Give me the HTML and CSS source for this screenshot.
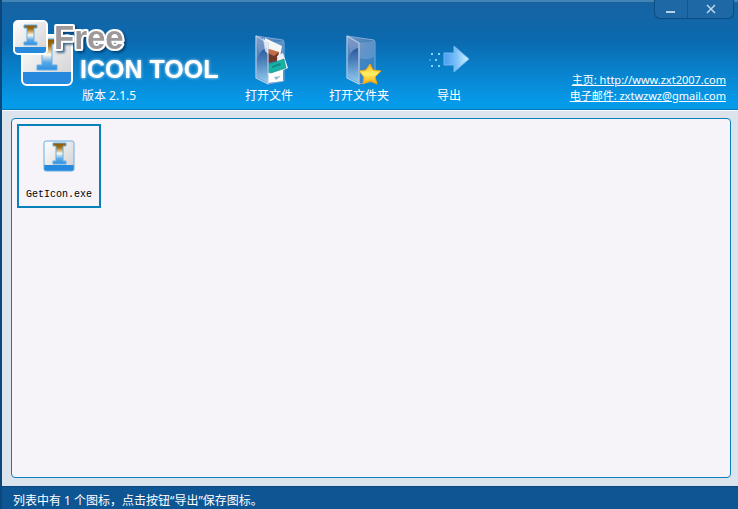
FILE: index.html
```html
<!DOCTYPE html>
<html lang="zh-CN">
<head>
<meta charset="utf-8">
<title>Free Icon Tool</title>
<link rel="stylesheet" href="styles.css">
</head>
<body>
<svg width="0" height="0" class="defs" aria-hidden="true">
  <defs>
    <linearGradient id="paper" x1="0" y1="0" x2="1" y2="1">
      <stop offset="0" stop-color="#fff"/><stop offset="1" stop-color="#cfcfd1"/>
    </linearGradient>
    <linearGradient id="beam" x1="0" y1="0" x2="0" y2="1">
      <stop offset="0" stop-color="#8a5a00"/><stop offset=".2" stop-color="#a06c0c"/>
      <stop offset=".5" stop-color="#fff8e8"/><stop offset=".75" stop-color="#5aa8e8"/><stop offset="1" stop-color="#2e8fe0"/>
    </linearGradient>
    <linearGradient id="glass" x1="0" y1="0" x2="1" y2="1">
      <stop offset="0" stop-color="#8fa6cd"/><stop offset=".45" stop-color="#5c87bf"/><stop offset="1" stop-color="#2f86cc"/>
    </linearGradient>
    <linearGradient id="flap" x1="0" y1="0" x2="0" y2="1">
      <stop offset="0" stop-color="#8b9fc9"/><stop offset=".5" stop-color="#5f84bd"/><stop offset="1" stop-color="#8cc3ea"/>
    </linearGradient>
    <linearGradient id="inner" x1="0" y1="0" x2="0" y2="1">
      <stop offset="0" stop-color="#164a94" stop-opacity=".8"/><stop offset="1" stop-color="#9fd2f4" stop-opacity=".7"/>
    </linearGradient>
    <linearGradient id="gold" x1="0" y1="0" x2="0" y2="1">
      <stop offset="0" stop-color="#ffb414"/><stop offset=".5" stop-color="#fff06a"/><stop offset="1" stop-color="#ffa600"/>
    </linearGradient>
    <linearGradient id="arrow" x1="0" y1="0" x2="1" y2="0">
      <stop offset="0" stop-color="#4a9df0"/><stop offset=".5" stop-color="#7cc0fa"/><stop offset="1" stop-color="#d2f5ff"/>
    </linearGradient>
    <filter id="glow" x="-10%" y="-40%" width="120%" height="180%">
      <feDropShadow dx="0" dy="0" stdDeviation="1.5" flood-color="#fff" flood-opacity=".8"/>
    </filter>
    <filter id="shade" x="-10%" y="-20%" width="130%" height="160%">
      <feDropShadow dx="2" dy="2" stdDeviation="1" flood-color="#003060" flood-opacity=".7"/>
    </filter>
    <symbol id="folder" viewBox="0 0 36 52">
      <path d="M2 2l27 4 1 2v39l-16 3z" fill="url(#glass)" fill-opacity=".75" stroke="#7fa8d6" stroke-width="1"/>
      <path d="M14 9l15-2v16q-7 4-15 1z" fill="#fff" fill-opacity=".15"/>
    </symbol>
    <symbol id="cover" viewBox="0 0 36 52">
      <path d="M2 2l12 7v41L2 44z" fill="url(#flap)" fill-opacity=".75"/>
      <path d="M3 30q1-14 10-16v34L3 43z" fill="url(#inner)"/>
      <path d="M2 2l12 7v41L2 44z" fill="none" stroke="#b5cce6" stroke-width="1.2" stroke-linejoin="round"/>
    </symbol>
  </defs>
</svg>
<div class="window">
  <header class="header">
    <div class="brand">
      <svg class="logo" viewBox="0 0 214 70" role="img" aria-label="Free Icon Tool">
        <rect x="9" y="17" width="50" height="50" rx="5" fill="url(#paper)"/>
        <path d="M9 54h50v8a5 5 0 0 1-5 5H14a5 5 0 0 1-5-5z" fill="#258ade"/>
        <path d="M24 21h20v5h-5v21h5v5H24v-5h5V26h-5z" fill="url(#beam)" stroke="#65aee5"/>
        <rect x="9" y="17" width="50" height="50" rx="5" fill="none" stroke="#fff" stroke-width="2"/>
        <rect x="1" y="3" width="33" height="33" rx="4" fill="url(#paper)"/>
        <path d="M1 29h33v3a4 4 0 0 1-4 4H5a4 4 0 0 1-4-4z" fill="#258ade"/>
        <path d="M11 7h13v3h-3v14h3v3H11v-3h3V10h-3z" fill="url(#beam)" stroke="#65aee5"/>
        <rect x="1" y="3" width="33" height="33" rx="4" fill="none" stroke="#fff" stroke-width="2"/>
        <text class="logo-free" x="41" y="31" filter="url(#shade)">Free</text>
        <text class="logo-name" x="67" y="60" filter="url(#glow)">ICON TOOL</text>
      </svg>
      <p class="version">版本 2.1.5</p>
    </div>
    <nav class="toolbar">
      <button class="tool" type="button">
        <svg viewBox="-3 0 36 52" class="tool-icon">
          <use href="#folder" width="36" height="52"/>
          <path d="M11 4l17 8-3 16-13-6z" fill="#f6f6f4"/>
          <path d="M12 14l13 4-3 9-9-3z" fill="#c46c48"/>
          <path d="M12 18l8 4 5-4-2 9-9 2z" fill="#6b3a2c"/>
          <path d="M23 22l6-3 5 15-9 4z" fill="#eef2f3"/>
          <path d="M14 36l15-4v15l-15 2z" fill="#fff"/>
          <path d="M13 31l17-6 2 9-15 5-4-1z" fill="#18b1a3" stroke="#087e7a" stroke-width=".5"/>
          <path d="M18 32l8-3 1 2-9 3z" fill="#087e7a" fill-opacity=".7"/>
          <path d="M20 43l7-1-5 4z" fill="#95b5ce"/>
          <use href="#cover" width="36" height="52"/>
          <path d="M9 4l5 5v11l-3-3z" fill="#fff" fill-opacity=".7"/>
        </svg>
        <span>打开文件</span>
      </button>
      <button class="tool" type="button">
        <svg viewBox="-4 0 36 52" class="tool-icon">
          <use href="#folder" width="36" height="52"/><use href="#cover" width="36" height="52"/>
          <path d="M25 30l3 6 8 1-6 6 2 7-7-3-7 3 1-7-5-6 7-1z" fill="url(#gold)" stroke="#f0a515" stroke-width="1" stroke-linejoin="round"/>
        </svg>
        <span>打开文件夹</span>
      </button>
      <button class="tool" type="button">
        <svg viewBox="1 1 44 52" class="tool-icon wide">
          <path d="M18 20h10v-7l15 13-15 13v-7H18z" fill="url(#arrow)" stroke="#71b9f0" stroke-width="1"/>
          <path d="M5 20h2v2H5zM5 32h2v2H5zM9 26h2v2H9zM12 20h2v2h-2zM12 32h2v2h-2z" fill="#7ad6fa"/>
          <path d="M3 26h2v2H3z" fill="#7ad6fa" fill-opacity=".4"/>
        </svg>
        <span>导出</span>
      </button>
    </nav>
    <address class="contact">
      <a href="http://www.zxt2007.com">主页: http://www.zxt2007.com</a>
      <a href="mailto:zxtwzwz@gmail.com">电子邮件: zxtwzwz@gmail.com</a>
    </address>
    <div class="controls">
      <button type="button" class="control" aria-label="最小化"><svg width="10" height="10"><path d="M0 8h9" stroke="#b5d1e8" stroke-width="2"/></svg></button>
      <button type="button" class="control close" aria-label="关闭"><svg width="10" height="10"><path d="M1 1l8 8M9 1l-8 8" stroke="#c0d8ec" stroke-width="1.5"/></svg></button>
    </div>
  </header>
  <main class="content">
    <section class="list">
      <figure class="item">
        <svg class="item-icon" viewBox="0 0 32 32">
          <rect x="1" y="1" width="30" height="30" rx="2" fill="url(#paper)"/>
          <path d="M1 25h30v4a2 2 0 0 1-2 2H3a2 2 0 0 1-2-2z" fill="#258ade"/>
          <path d="M10 3h13v3h-3v15h3v3H10v-3h3V6h-3z" fill="url(#beam)" stroke="#65aee5"/>
          <rect x="1" y="1" width="30" height="30" rx="2" fill="none" stroke="#65aee5"/>
        </svg>
        <figcaption>GetIcon.exe</figcaption>
      </figure>
    </section>
  </main>
  <footer class="status">列表中有 1 个图标，点击按钮“导出”保存图标。</footer>
</div>
</body>
</html>
```
FILE: styles.css
```css
* {
  box-sizing: border-box;
}

body {
  margin: 0;
  background: #dbe4ed;
  font: 12px/16px "Noto Sans", "Noto Sans CJK SC", sans-serif;
  color: #fff;
}

.defs {
  position: absolute;
}

.window {
  display: flex;
  flex-direction: column;
  min-height: 100vh;
  border-left: 2px solid #0a477b;
}

.header {
  position: relative;
  display: flex;
  align-items: flex-end;
  padding: 0 12px 5px 11px;
  border-top: 2px solid #4585b6;
  border-bottom: 1px solid #0879bd;
  background: linear-gradient(#1763a2, #0b69ae 35%, #069aea 94%, #049be8);
}

.brand {
  flex: none;
  width: 211px;
  padding-top: 16px;
}

.logo {
  display: block;
  width: 214px;
  height: 70px;
  overflow: visible;
}

.logo-free {
  font: bold 33px "Liberation Sans", sans-serif;
  fill: #9d999b;
  stroke: #fff;
  stroke-width: 4px;
  stroke-linejoin: round;
  paint-order: stroke;
}

.logo-name {
  font: bold 25px "Liberation Sans", sans-serif;
  fill: #fff;
}

.version {
  margin: 0;
  padding-left: 69px;
}

.toolbar {
  display: flex;
  flex: none;
}

.tool {
  display: flex;
  flex-direction: column;
  align-items: center;
  gap: 2px;
  width: 90px;
  padding: 0;
  border: 0;
  background: none;
  color: inherit;
  font: inherit;
}

.tool-icon {
  width: 36px;
  height: 52px;
  overflow: visible;
}

.tool-icon.wide {
  width: 44px;
}

.contact {
  display: flex;
  flex-direction: column;
  align-items: flex-end;
  margin-left: auto;
  font-size: 11px;
  font-style: normal;
  white-space: nowrap;
}

.contact a {
  color: inherit;
}

.controls {
  position: absolute;
  top: -2px;
  right: 4px;
  display: flex;
  width: 80px;
  height: 19px;
  border: 1px solid #0b4d85;
  border-top: 0;
  border-radius: 0 0 6px 6px;
  background: #1d68a5;
}

.control {
  display: flex;
  align-items: center;
  justify-content: center;
  width: 33px;
  padding: 0;
  border: 0;
  border-right: 1px solid #105692;
  background: none;
}

.control.close {
  flex: 1;
  border: 0;
}

.content {
  display: flex;
  flex: 1;
  padding: 7px 7px 8px 9px;
  border-top: 1px solid #f7fafc;
}

.list {
  flex: 1;
  padding: 5px;
  border: 1px solid #0a80bb;
  border-radius: 4px;
  background: #f6f4f8;
}

.item {
  display: flex;
  flex-direction: column;
  align-items: center;
  gap: 15px;
  width: 84px;
  height: 84px;
  margin: 0;
  padding-top: 14px;
  border: 2px solid #0a80bb;
  color: #000;
  font: 10px/16px "Liberation Mono", monospace;
}

.item-icon {
  width: 32px;
  height: 32px;
}

.status {
  padding: 6px 11px 0;
  border-top: 1px solid #08467c;
  background: #0e5594;
}
```
